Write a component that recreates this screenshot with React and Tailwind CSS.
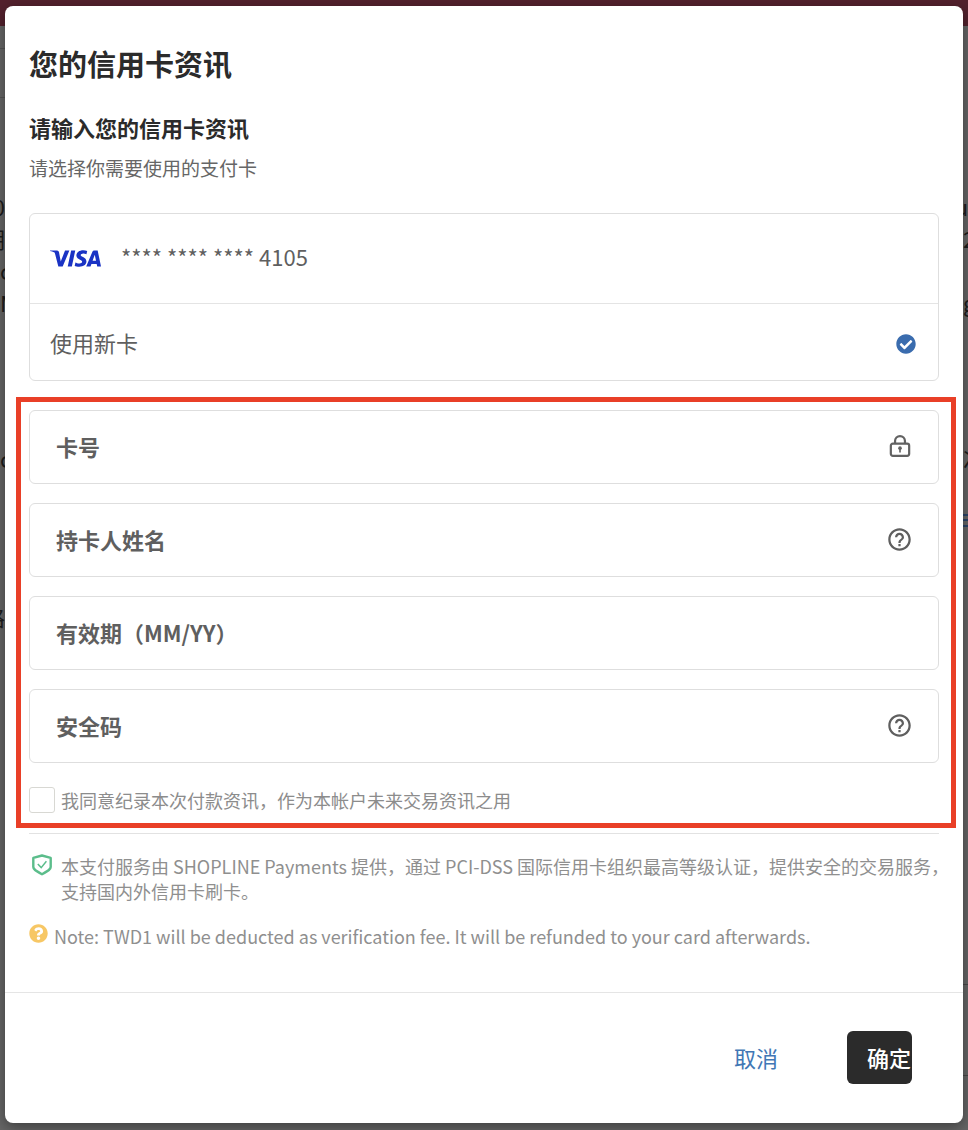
import { FaCheckCircle, FaQuestionCircle } from "react-icons/fa";
import { MdHelpOutline } from "react-icons/md";
import { SiVisa } from "react-icons/si";

function LockIcon({ className }) {
  return (
    <svg viewBox="0 0 24 24" fill="none" stroke="currentColor" strokeWidth="2.4" className={className} aria-hidden="true">
      <rect x="2" y="9.5" width="20" height="13.200" rx="2.2" />
      <path d="M6.6 9.5V6.6a5.400 5.400 0 0 1 10.800 0v2.9" />
      <circle cx="12" cy="14.4" r="2" fill="currentColor" stroke="none" />
      <path d="M12 14.500v4.500" strokeWidth="1.8" />
    </svg>
  );
}

function ShieldIcon({ className }) {
  return (
    <svg viewBox="0 0 20 22" fill="none" stroke="currentColor" className={className} aria-hidden="true">
      <path d="M10 1.500 18.700 3.900v9.200c0 2.200-1.800 3.500-8.700 7.100-6.900-3.600-8.700-4.900-8.700-7.100V3.900z" strokeWidth="2.400" strokeLinejoin="round" />
      <path d="m5.800 10 3.400 3.600 5.200-6.400" strokeWidth="1.500" />
    </svg>
  );
}

const fields = [
  { id: "card-number", label: "卡号", icon: "lock" },
  { id: "card-holder", label: "持卡人姓名", icon: "help" },
  { id: "card-expiry", label: "有效期（MM/YY）" },
  { id: "card-cvc", label: "安全码", icon: "help" },
];

function Field({ id, label, icon }) {
  return (
    <div className="flex h-[74px] items-center rounded-md border border-[#dedede] pr-[26px] pb-[2px] pl-[26px]">
      <label htmlFor={id} className="sr-only">{label}</label>
      <input
        id={id}
        placeholder={label}
        className="h-14 min-w-0 flex-1 bg-transparent text-[22px] leading-10 font-bold text-[#5f5f5f] outline-none placeholder:text-[#5f5f5f] placeholder:opacity-100"
      />
      {icon === "lock" && <LockIcon className="mr-px size-[22px] text-[#626262]" />}
      {icon === "help" && <MdHelpOutline className="-mr-px size-[27px] text-[#5f5f5f]" />}
    </div>
  );
}

function Backdrop() {
  return (
    <div aria-hidden="true" className="absolute inset-0 overflow-hidden text-[22px] leading-8 text-[#1c1c1c]">
      <div className="h-[26px] bg-[#53212d]" />
      <div className="flex justify-between">
        <div className="flex w-[5px] flex-col overflow-hidden">
          <div className="h-[23px] border-b border-[#545454]" />
          <div className="h-[49px] border-b border-[#545454]" />
          <div className="mt-[92px] flex h-8 justify-end">0</div>
          <div className="flex h-8 justify-end">期</div>
          <div className="h-8">c</div>
          <div className="h-8">M</div>
          <div className="mt-[124px] h-8">c</div>
          <div className="mt-[126px] flex h-8 justify-end">路</div>
        </div>
        <div className="flex w-[5px] flex-col overflow-hidden">
          <div className="mt-[164px] flex h-8 justify-end">u</div>
          <div className="h-8">2</div>
          <div className="mt-8 h-8">g</div>
          <div className="mt-[124px] h-8">次</div>
          <div className="mt-[40px] h-[7px] border-y-2 border-[#2b4468]" />
          <div className="mt-1 h-[2px] bg-[#2b4468]" />
          <div className="mt-[457px] h-[92px] border-y border-[#484848]" />
        </div>
      </div>
    </div>
  );
}

export default function App() {
  return (
    <div className="relative min-h-screen overflow-hidden bg-[#666] pt-[6px] pb-[7px] font-['Noto_Sans_CJK_SC',sans-serif]">
      <Backdrop />
      <main className="relative mx-[5px] rounded-lg bg-white pt-[37px] shadow-[0_4px_14px_rgba(0,0,0,0.4)]">
        <div className="px-6">
          <h1 className="text-[29px] leading-10 font-bold text-[#2b2b2b]">您的信用卡资讯</h1>
          <h2 className="mt-7 text-[22px] leading-8 font-bold text-[#2b2b2b]">请输入您的信用卡资讯</h2>
          <p className="mt-[11px] text-[19px] leading-7 text-[#666]">请选择你需要使用的支付卡</p>

          <div className="mt-[31px] rounded-md border border-[#dedede] text-[22px] text-[#5f5f5f]">
            <button type="button" className="flex h-[90px] w-full items-center gap-5 border-b border-[#e4e4e4] px-5">
              <SiVisa viewBox="0 8 24 8" className="h-[17px] w-[51px] text-[#1a33c4]" />
              <span className="pb-1">**** **** **** 4105</span>
            </button>
            <button type="button" className="flex h-[76px] w-full items-center justify-between px-5">
              <span>使用新卡</span>
              <FaCheckCircle className="mt-1 mr-[2px] size-5 text-[#3a6cae]" />
            </button>
          </div>
        </div>

        <section className="mt-4 mr-[7px] ml-[11px] border-[5px] border-[#e93f27] pt-2 pr-3 pb-[7px] pl-2">
          <div className="flex flex-col gap-[19px]">
            {fields.map((field) => (
              <Field key={field.id} {...field} />
            ))}
          </div>
          <label className="mt-[21px] flex items-center gap-[6px] text-[18px] leading-8 text-[#8c8c8c]">
            <input type="checkbox" className="size-[26px] appearance-none rounded-[3px] border border-[#d8d8d3] bg-white" />
            我同意纪录本次付款资讯，作为本帐户未来交易资讯之用
          </label>
        </section>

        <div className="mx-6 mt-[5px] border-t border-[#e2e2e2]" />

        <div className="pt-5 pr-3 pl-6 text-[18px] leading-[25px] text-[#8f8f8f]">
          <div className="flex">
            <ShieldIcon className="mr-[9px] ml-[3px] h-[22px] w-5 shrink-0 text-[#5bbd8b]" />
            <p>本支付服务由 SHOPLINE Payments 提供，通过 PCI-DSS 国际信用卡组织最高等级认证，提供安全的交易服务，支持国内外信用卡刷卡。</p>
          </div>
          <div className="mt-5 flex gap-[6px]">
            <FaQuestionCircle className="size-[19px] shrink-0 text-[#f7c765]" />
            <p>Note: TWD1 will be deducted as verification fee. It will be refunded to your card afterwards.</p>
          </div>
        </div>

        <footer className="mt-[43px] flex items-center justify-end gap-[69px] border-t border-[#e5e5e5] pt-[38px] pr-[51px] pb-[39px] text-[22px]">
          <button type="button" className="text-[#4177b5]">取消</button>
          <button type="button" className="h-[53px] w-[65px] overflow-hidden rounded-md bg-[#2b2b2b] pl-5 text-left font-medium whitespace-nowrap text-white">确定</button>
        </footer>
      </main>
    </div>
  );
}
